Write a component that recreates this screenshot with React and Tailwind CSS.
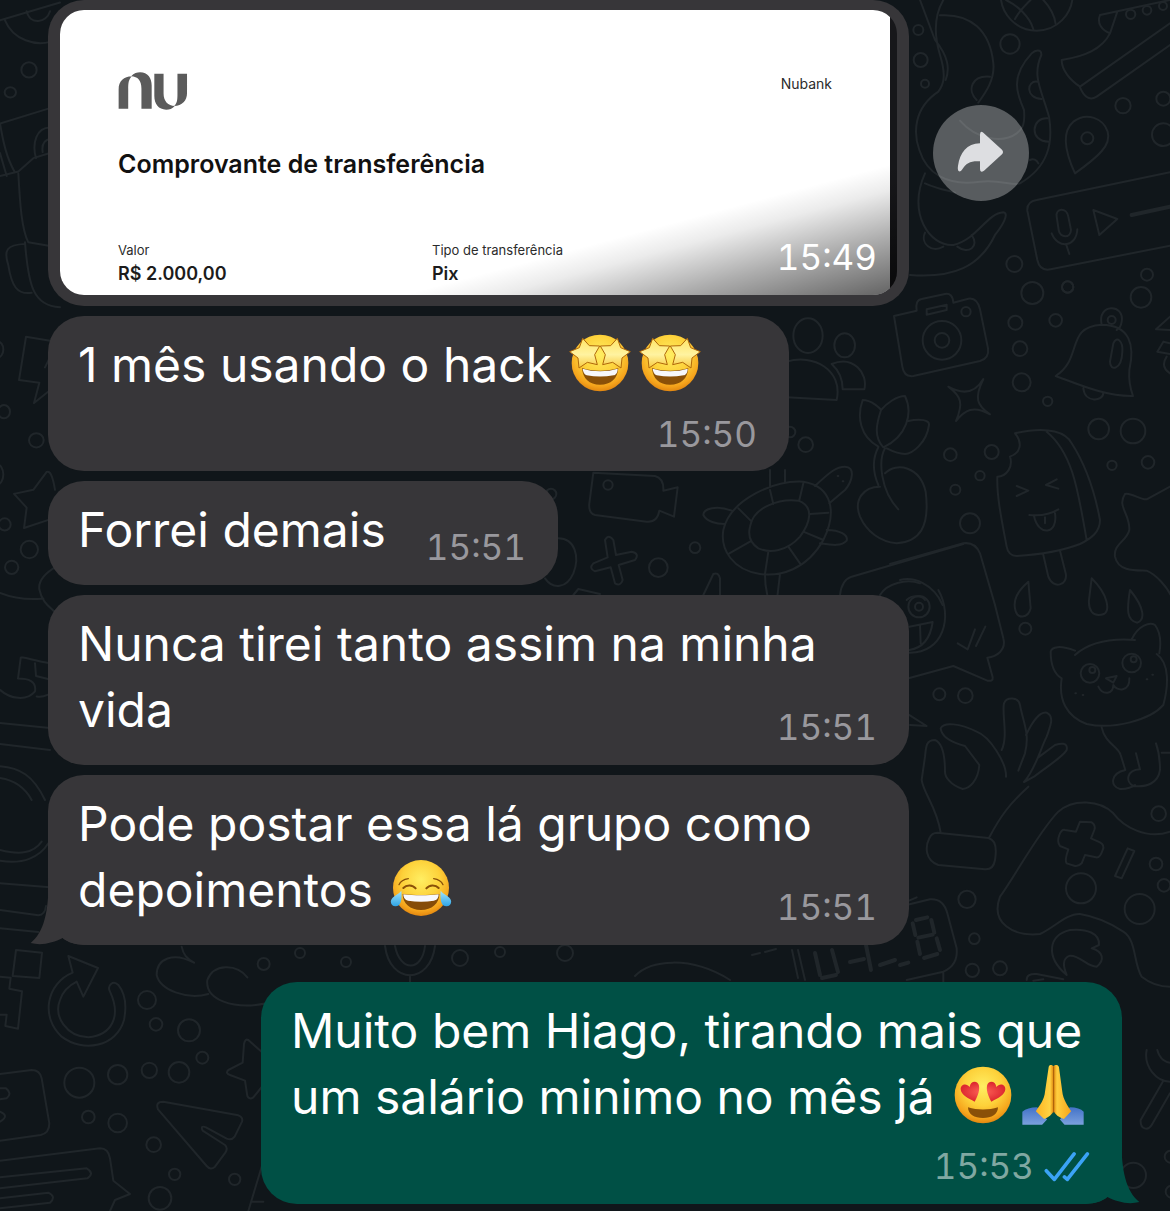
import React from "react";

const TAIL = "M146 118 C146 222 132 280 92 313 C125 322 160 312 188 298 C205 312 225 318 250 318 L262 318 L262 118 Z";

function Doodles() {
  return (
    <svg
      aria-hidden="true"
      className="absolute inset-0 h-full w-full fill-none stroke-[#20262a] stroke-2 [&_*]:[vector-effect:non-scaling-stroke]"
      viewBox="0 0 1170 1211"
      preserveAspectRatio="xMinYMin slice"
      strokeLinecap="round"
      strokeLinejoin="round"
    >
      <g transform="translate(900 0) scale(.33333)">
        <circle cx="55" cy="90" r="15" /><circle cx="62" cy="180" r="21" /><circle cx="75" cy="251" r="12" />
        <circle cx="330" cy="132" r="29" /><circle cx="669" cy="317" r="23" /><circle cx="790" cy="296" r="21" />
        <circle cx="790" cy="404" r="34" /><circle cx="343" cy="792" r="24" /><circle cx="503" cy="861" r="17" />
        <circle cx="741" cy="824" r="18" /><circle cx="692" cy="43" r="14" /><circle cx="741" cy="31" r="13" /><circle cx="789" cy="18" r="12" />
        <circle cx="410" cy="-16" r="108" /><path d="M345 57 C365 20 390 5 400 -10 M318 0 C350 15 390 50 400 88 M430 0 C450 20 465 50 467 72" />
        <path d="M60 0 L105 120 C145 170 150 205 137 240 M130 0 C95 60 108 125 120 165 C140 230 130 255 115 275 C40 325 40 400 58 450 C80 520 140 560 240 545 C300 537 340 560 360 550 C445 500 460 430 447 350 C425 270 395 230 424 165 C425 145 405 150 395 160 C330 230 350 280 372 330 C375 370 370 385 350 400 C310 430 230 420 180 362" />
        <path d="M120 46 C210 40 270 90 280 190 C285 240 255 280 235 308 M270 230 C215 225 200 270 230 300 M412 245 C380 240 375 295 425 297 M443 355 C395 350 385 425 447 425 M390 480 C400 475 410 480 415 490" />
        <path d="M75 520 C20 640 90 740 160 735 C230 720 260 640 310 637 C330 640 305 680 285 705 C240 800 160 835 30 825 M75 698 C60 730 95 760 130 740 M215 705 C240 740 205 765 172 740 M75 550 C120 570 150 572 165 578" />
        <path d="M600 45 L810 0 M600 45 C590 70 605 90 630 100 L652 35 M630 100 C605 150 550 170 485 180 C485 210 510 240 540 260 L810 70 M540 262 C550 285 565 305 590 290 L810 135" />
        <path d="M525 520 C495 455 485 395 520 365 C560 335 610 355 623 395 C635 435 595 470 525 520Z" /><circle cx="562" cy="415" r="18" />
        <path d="M810 517 L410 600 Q380 605 382 632 L412 780 Q420 815 452 808 L810 737" />
        <path d="M470 650 C465 625 500 620 505 650 L513 690 C512 715 480 715 476 690Z M455 700 C475 750 530 740 532 688 M498 732 L508 762 M580 630 L652 657 L598 705Z" /><path d="M695 645 L810 620" strokeWidth="4" />
      </g>
      <g transform="translate(900 280) scale(.33333)">
        <path d="M-18 108 L50 92 Q45 60 65 57 L135 42 Q158 38 160 68 L205 56 Q232 52 240 88 L264 205 Q268 235 240 243 L40 288 Q12 292 7 260 Z" />
        <circle cx="126" cy="181" r="58" /><circle cx="126" cy="181" r="22" /><circle cx="198" cy="95" r="14" /><path d="M80 88 L140 74 V90 L80 104Z" />
        <circle cx="397" cy="39" r="33" /><circle cx="503" cy="21" r="17" /><circle cx="346" cy="128" r="21" /><circle cx="467" cy="121" r="19" /><circle cx="360" cy="206" r="22" /><circle cx="365" cy="307" r="27" /><circle cx="443" cy="364" r="14" /><circle cx="723" cy="52" r="31" />
        <circle cx="596" cy="447" r="31" /><circle cx="699" cy="453" r="37" /><circle cx="636" cy="556" r="14" /><circle cx="744" cy="547" r="19" /><circle cx="151" cy="524" r="19" /><circle cx="275" cy="516" r="21" /><circle cx="240" cy="587" r="14" /><circle cx="166" cy="629" r="15" /><circle cx="210" cy="730" r="30" />
        <path d="M145 320 C190 345 225 340 250 297 C222 355 230 375 270 403 C220 375 195 390 168 423 C190 370 185 350 145 320Z" />
        <path d="M467 288 C550 235 495 140 605 134 C690 135 705 195 688 270 Q685 310 699 348 C620 350 540 315 467 288Z M605 134 C590 70 675 70 665 125 Q662 145 650 150 M550 325 C555 370 610 365 610 338" /><circle cx="635" cy="120" r="12" /><path d="M640 190 C650 165 670 185 667 215 C665 270 630 275 630 245Z" />
        <path d="M345 460 C450 435 500 460 515 490 C560 560 585 640 600 720 C600 755 575 775 540 792 C480 815 400 825 350 828 Q325 828 320 800 C305 720 290 650 292 590 C320 590 340 560 330 530 C360 520 370 490 345 460Z M440 455 C520 520 535 640 560 780 M430 825 L445 890 C460 930 505 915 497 880 L480 812 M350 618 L385 632 L350 648 M470 598 L438 615 L475 626 M388 705 Q440 710 475 688 M402 708 C415 770 475 765 465 700 M435 712 V730" />
        <path d="M0 900 C40 890 100 910 128 975 M20 960 C35 945 65 945 75 960 M-30 852 L190 790 Q225 785 240 820 L285 975" />
        <path d="M810 620 L740 658 C720 660 690 635 675 642 C650 680 690 700 688 750 C680 785 640 790 645 830 C655 880 720 870 740 872 C770 885 800 920 815 950 M810 110 L768 148 L810 150 M790 185 L772 215 L810 222 M790 185 L810 190 M800 230 Q780 260 810 280" />
        <path d="M385 905 C350 935 340 960 345 985 C350 1020 385 1015 392 985 Z M575 895 C625 945 630 990 612 1002 C575 1015 565 985 567 960Z M690 930 C735 985 735 1020 712 1028 C680 1022 680 990 690 930Z" />
      </g>
      <g transform="translate(900 590) scale(.33333)">
        <path d="M285 45 L310 145 C320 180 290 200 262 203 L278 262 Q280 275 262 272 L160 228 L20 266 M20 370 L80 408 L30 405 M115 0 C160 80 130 190 28 188 M28 110 L98 96 C90 155 60 175 28 180 M60 105 L62 160" /><circle cx="57" cy="50" r="32" /><circle cx="57" cy="50" r="12" />
        <path d="M173 160 L203 178 L225 118 M228 168 L256 110" />
        <circle cx="376" cy="116" r="18" /><circle cx="118" cy="313" r="18" /><circle cx="196" cy="317" r="22" />
        <path d="M525 195 C570 155 640 145 705 150 M695 148 C715 105 750 95 765 105 C780 125 785 150 778 190 M525 182 C480 165 455 170 452 185 C452 220 460 250 485 265 C475 330 500 380 560 402 C640 420 750 390 790 345 C805 290 810 220 770 192 M605 412 C615 460 655 470 662 495 L676 540 C630 550 630 590 660 597 C680 598 700 590 705 585 M708 490 L720 538 C680 540 675 575 700 588 C740 592 775 580 780 540 C780 505 775 480 768 460 M785 488 H810" />
        <circle cx="570" cy="250" r="28" /><circle cx="695" cy="219" r="28" /><circle cx="577" cy="240" r="9" /><circle cx="701" cy="208" r="9" /><path d="M618 265 L650 258 L640 278Z M595 290 C610 320 640 310 640 285 C650 305 690 305 688 265 M526 310 h2 M548 315 h2 M740 268 h2 M757 254 h2" />
        <path d="M318 560 C320 520 270 440 230 425 C180 400 130 395 122 415 C125 445 165 460 195 468 L238 525 C235 570 210 595 188 597 C150 585 135 560 135 545 C135 500 130 460 105 450 C80 450 78 465 75 500 L65 570 C70 610 110 650 122 728 M305 480 C325 440 305 370 312 340 C320 320 355 320 360 345 C370 400 390 430 375 490 L355 542 M378 435 C395 400 415 365 440 368 C465 380 450 410 440 440 C420 480 405 540 372 576 L402 560 C440 530 490 500 500 480 C505 455 480 460 465 465 L415 502 M385 590 C330 640 300 680 268 742 M112 728 L265 744 C290 750 290 780 285 810 Q280 840 255 838 L115 825 C75 810 75 770 88 745 Q95 728 112 728Z" />
        <path d="M810 725 C740 750 670 710 640 670 C600 630 520 625 475 665 C420 720 350 850 300 920 C270 1000 340 1040 420 1032 C460 1015 500 970 540 972 C590 980 640 1005 670 1025 C710 1050 700 1120 725 1160 C750 1180 780 1190 810 1190" />
        <path d="M540 695 L575 697 Q588 705 583 720 L573 745 L600 757 Q615 765 608 780 Q600 805 588 802 L555 795 L545 820 Q535 830 525 828 L500 820 Q493 812 505 778 L480 768 Q470 755 478 735 Q485 717 495 720 L528 725Z M683 775 L703 783 L665 865 L645 858Z" />
        <circle cx="543" cy="895" r="45" /><circle cx="719" cy="957" r="45" /><circle cx="776" cy="671" r="22" /><circle cx="768" cy="822" r="19" /><circle cx="792" cy="886" r="19" /><circle cx="201" cy="928" r="26" /><circle cx="223" cy="1046" r="16" /><circle cx="217" cy="1141" r="20" /><circle cx="300" cy="1135" r="21" />
        <path d="M500 1155 C435 1100 445 1035 510 1020 C560 1015 600 1030 597 1065 L575 1075 C610 1085 615 1110 590 1130 C560 1130 540 1095 510 1097 C485 1105 490 1130 500 1155Z M380 1170 Q380 1150 410 1152 L490 1168 M400 1172 L430 1168" />
        <path d="M20 945 L90 928 Q130 925 142 970 L170 1075 Q175 1125 130 1145 L20 1170 M130 1148 V1175 M20 935 L50 922" /><path d="M48 990 L82 982 M38 1000 L46 1035 M94 990 L103 1028 M55 1043 L98 1034 M52 1055 L60 1092 M110 1045 L120 1080 M72 1104 L112 1092 M0 1125 L25 1118" strokeWidth="4" />
      </g>
      <g transform="translate(540 470) scale(.33333)">
        <path d="M160 8 L345 18 Q372 25 370 62 L413 52 L402 140 L358 122 Q352 158 320 155 L165 135 Q145 130 148 100Z" /><circle cx="204" cy="45" r="14" /><circle cx="33" cy="72" r="16" />
        <path d="M55 205 C105 205 120 260 100 310 C80 355 40 360 15 325 M195 210 Q205 190 220 210 L228 255 L275 245 Q300 250 285 270 L236 285 L248 330 Q242 350 225 340 L212 292 L165 304 Q145 295 160 280 L203 262Z M490 375 L520 312 Q535 305 540 325 V375 M100 375 L115 357 L180 372" />
        <circle cx="465" cy="233" r="16" /><circle cx="355" cy="293" r="28" />
        <path d="M550 180 C570 90 700 30 790 35 C880 50 890 130 850 210 C800 300 720 320 660 312 C580 300 540 240 550 180Z M630 170 C640 110 720 85 775 92 C825 110 810 160 780 200 C740 245 690 250 655 235 C625 215 625 190 630 170Z M690 60 L700 102 M790 40 L778 90 M810 132 L865 128 M790 185 L850 210 M745 230 L780 280 M685 245 L675 312 M630 215 L568 250 M595 115 L635 155 M575 122 C530 105 490 115 490 135 C500 155 530 162 553 162 M825 48 C870 5 890 -10 915 -10 C945 -10 940 30 915 60 L868 100 M860 180 C900 180 925 195 920 212 C905 230 875 225 840 220 M675 315 C675 350 680 365 683 380 M720 312 L712 380 M690 50 V0 M735 35 V0 M893 18 h2 M908 34 h2" />
        <path d="M900 375 Q905 330 935 320 L1270 222 M1020 375 C1040 340 1100 325 1140 340" />
      </g>
      <g transform="translate(780 310) scale(.33333)">
        <ellipse cx="84" cy="77" rx="44" ry="52" /><ellipse cx="194" cy="106" rx="31" ry="36" /><circle cx="77" cy="404" r="22" /><circle cx="30" cy="366" r="16" />
        <path d="M20 155 C100 130 190 180 170 270 L20 262 M155 162 C220 135 265 190 253 238 H188 C188 205 175 180 155 162 M295 410 C240 380 230 320 248 270 C275 270 300 295 303 300 C320 280 350 258 375 258 C400 310 380 380 310 412 C280 380 290 340 303 300 M385 333 C420 325 450 330 447 345 C440 400 395 432 375 432 C350 432 330 420 320 415 M295 412 C275 450 280 490 295 525 M315 415 C295 450 300 540 355 598 M315 490 C350 455 420 470 437 545 C450 650 420 695 350 700 C300 695 260 665 240 620 C220 570 250 530 300 530" />
      </g>
      <g transform="translate(0 840) scale(.33333)">
        <path d="M0 30 C60 45 100 40 125 5 M0 62 C70 75 120 50 145 10 M0 130 L150 142 M0 210 L115 226 Q135 225 138 198 M0 265 L115 276 M48 330 L126 338 L118 414 L38 408Z M0 410 L32 413 L28 446 L66 454 L54 566 L16 558 L20 524 H0" />
        <path d="M218 398 C140 430 120 530 185 590 C250 640 350 620 372 540 C380 500 375 460 355 435 C340 420 320 435 330 455 C365 530 335 585 265 592 C200 590 160 530 180 480 C190 450 210 435 230 425 L250 470 L294 384 L205 348Z" />
        <path d="M545 320 C550 345 560 355 582 368 C520 335 470 355 470 405 C480 450 560 480 625 462 M742 412 C710 370 640 370 622 420 C615 480 700 510 800 490" />
        <circle cx="791" cy="372" r="18" /><circle cx="441" cy="480" r="27" /><circle cx="468" cy="553" r="19" /><circle cx="567" cy="571" r="33" /><circle cx="607" cy="653" r="18" /><circle cx="238" cy="728" r="45" /><circle cx="353" cy="704" r="29" /><circle cx="448" cy="691" r="23" /><circle cx="537" cy="697" r="31" /><circle cx="265" cy="831" r="19" /><circle cx="353" cy="849" r="28" /><circle cx="461" cy="914" r="22" /><circle cx="524" cy="1003" r="17" /><circle cx="704" cy="1018" r="17" /><circle cx="480" cy="1075" r="34" />
        <path d="M790 640 L745 600 Q735 595 732 612 L728 668 L685 690 Q675 700 690 705 L735 722 L742 768 Q748 780 760 772 L790 735 M490 785 L715 826 Q730 832 726 845 L704 890 Q695 902 680 896 L618 862 Q600 855 608 872 L675 915 Q685 925 676 938 L645 980 Q632 992 620 978 L474 808 Q465 785 490 785Z" />
        <path d="M0 702 L95 690 Q120 690 125 715 L148 850 Q148 880 122 885 L0 902 M0 745 H18 Q38 760 20 775 L0 778 M0 815 Q30 828 0 845 M0 962 L300 925 Q325 925 330 955 L340 1022 L390 1062 L345 1080 L330 1113 M0 1012 L260 985 Q285 1000 262 1015 L0 1045 M0 1075 L145 1058 Q170 1070 150 1088 L0 1105 M785 980 L745 1113 M755 1085 H790" />
      </g>
      <g transform="scale(.33333 .5102)">
        <path d="M0 40 L180 5 M15 40 C40 80 110 90 150 82 M80 22 C90 50 140 45 150 22 M0 242 L150 212 M0 242 C10 280 20 310 45 338 M0 300 L20 345 M0 345 L55 336 L100 310 L150 300 M55 340 C60 400 65 450 85 475 L150 482 M75 475 C85 560 100 600 180 602 M75 478 C20 480 10 490 25 520 C35 560 50 578 95 574 M150 250 C110 250 95 280 108 310 M150 272 C130 275 125 285 128 298" />
        <path d="M150 668 L78 660 L57 745 L118 750 L102 790 L150 765 M135 720 L150 700 M42 968 L100 960 L140 925 Q155 920 165 960 M42 968 L80 995 L72 1035 L150 1018 M0 1162 C50 1175 100 1175 130 1173 M170 1110 C130 1125 115 1140 118 1155 C125 1180 150 1190 165 1200 M150 1300 C100 1295 60 1285 62 1290 L54 1330 C85 1330 110 1335 105 1355 C80 1375 30 1370 0 1352 M105 1300 L108 1325 L150 1332 M110 1365 C130 1368 140 1362 150 1360 M0 1417 L150 1427 M0 1458 L150 1470 M0 1502 C60 1505 100 1520 135 1568 M0 1525 C50 1530 80 1550 95 1568" />
        <ellipse cx="87" cy="137" rx="23" ry="15" /><ellipse cx="31" cy="181" rx="17" ry="10" /><ellipse cx="109" cy="863" rx="22" ry="14" /><ellipse cx="88" cy="1077" rx="26" ry="17" /><ellipse cx="35" cy="1112" rx="20" ry="13" /><ellipse cx="12" cy="807" rx="18" ry="13" /><ellipse cx="14" cy="1028" rx="18" ry="12" /><ellipse cx="-8" cy="685" rx="18" ry="16" /><ellipse cx="-10" cy="930" rx="20" ry="20" />
      </g>
      <path d="M385 946 C390 985 430 985 435 946 M395 946 C400 972 422 972 425 946 M410 975 V990 M635 976 C650 960 690 955 730 980 M765 952 L776 949 M752 955 L760 953 M792 950 L798 978 M798 950 L805 980" />
      <path d="M815 953 L820 975 M832 950 L838 972 M822 978 L836 975 M850 962 L864 959 M866 945 L871 970 M880 965 L895 960" strokeWidth="4" />
      <circle cx="300" cy="953" r="5" /><circle cx="460" cy="958" r="8" /><circle cx="500" cy="952" r="5" /><circle cx="565" cy="953" r="8" /><circle cx="346" cy="962" r="5" />
      <g transform="translate(930 1050) scale(.33333)">
        <path d="M650 0 C640 50 680 95 720 95 M682 0 C690 30 710 38 720 38 M700 92 L632 210 C630 240 655 242 665 225 L720 130" /><circle cx="610" cy="376" r="38" /><circle cx="722" cy="320" r="18" /><circle cx="725" cy="425" r="18" />
      </g>
    </svg>
  );
}

function Ramp({ id }) {
  return (
    <radialGradient id={id} cx=".5" cy=".35" r=".68">
      <stop offset="0" stopColor="#ffee62" />
      <stop offset=".5" stopColor="#fdd13a" />
      <stop offset=".82" stopColor="#f5a41c" />
      <stop offset="1" stopColor="#dc7d0c" />
    </radialGradient>
  );
}

function Emoji({ label, viewBox, children }) {
  return (
    <svg role="img" aria-label={label} viewBox={viewBox} className="mx-1 -mt-3 inline-block h-15 w-[62px] align-middle">
      {children}
    </svg>
  );
}

const STAR_LEFT = "M75 54 L95 76 L126 77 L111 103 L119 133 L89 126 L64 143 L61 113 L36 94 L65 82 Z";
const STAR_RIGHT = "M179 54 L159 76 L128 77 L143 103 L135 133 L165 126 L190 143 L193 113 L218 94 L189 82 Z";

function StarStruck({ id }) {
  return (
    <Emoji label="Olhos de estrela" viewBox="34 38 186 180">
      <defs>
        <Ramp id={id} />
        <linearGradient id={id + "s"} x1="0" y1="0" x2="0" y2="1">
          <stop offset="0" stopColor="#ffe566" />
          <stop offset=".55" stopColor="#fff3a0" />
          <stop offset="1" stopColor="#f8c93e" />
        </linearGradient>
      </defs>
      <circle cx="127" cy="128" r="85" fill={`url(#${id})`} />
      <path d="M73 143 C105 154 150 154 182 143 C180 175 160 193 127 193 C95 193 75 175 73 143Z" fill="#8a5008" />
      <path d="M75 145 C105 155 150 155 180 145 C180 158 174 164 168 165 C140 170 115 170 87 165 C80 163 76 155 75 145Z" fill="#f7f7fb" />
      <g fill={`url(#${id}s)`} stroke="#b0680a" strokeWidth="3" strokeLinejoin="round">
        <path d={STAR_LEFT} />
        <path d={STAR_RIGHT} />
      </g>
    </Emoji>
  );
}

function Joy() {
  return (
    <Emoji label="Chorando de rir" viewBox="40 28 186 180">
      <defs>
        <Ramp id="joy" />
        <linearGradient id="tear" x1="0" y1="0" x2="0" y2="1">
          <stop offset="0" stopColor="#a6e6fb" />
          <stop offset="1" stopColor="#2da4e6" />
        </linearGradient>
      </defs>
      <circle cx="133" cy="118" r="84" fill="url(#joy)" />
      <g fill="none" stroke="#8a5008" strokeLinecap="round">
        <path d="M67 108 C72 97 83 92 95 90 M199 108 C194 97 183 92 171 90" strokeWidth="4" />
        <path d="M80 118 C90 107 108 108 117 119 M149 119 C158 108 176 107 186 118" strokeWidth="6" />
      </g>
      <path d="M78 136 C110 140 156 140 188 136 C188 165 165 184 133 184 C101 184 78 165 78 136Z" fill="#854c08" />
      <path d="M80 137 C110 141 156 141 186 137 C186 148 180 155 172 156 C145 160 121 160 94 156 C86 155 80 147 80 137Z" fill="#f8f8fc" />
      <path d="M74 126 C76 150 74 173 57 173 C42 173 38 157 48 147 C56 139 66 136 74 126Z M192 126 C190 150 192 173 209 173 C224 173 228 157 218 147 C210 139 200 136 192 126Z" fill="url(#tear)" />
    </Emoji>
  );
}

function HeartEyes() {
  return (
    <Emoji label="Olhos de coração" viewBox="64 48 186 180">
      <defs>
        <Ramp id="heyes" />
        <radialGradient id="heart">
          <stop offset="0" stopColor="#ff6558" />
          <stop offset="1" stopColor="#dd2730" />
        </radialGradient>
      </defs>
      <circle cx="157" cy="138" r="85" fill="url(#heyes)" />
      <path d="M132 158 C112 148 91 138 90 121 C89 105 108 101 117 114 C119 94 142 94 145 110 C148 128 138 146 132 158Z M182 158 C202 148 223 138 224 121 C225 105 206 101 197 114 C195 94 172 94 169 110 C166 128 176 146 182 158Z" fill="url(#heart)" />
      <path d="M112 175 C140 184 174 184 202 175 C202 196 183 207 157 207 C131 207 112 196 112 175Z" fill="#8a5008" />
    </Emoji>
  );
}

function Hands() {
  return (
    <Emoji label="Mãos juntas" viewBox="270 50 186 182">
      <defs>
        <linearGradient id="palm" x1="0" y1="0" x2="1" y2="0">
          <stop offset="0" stopColor="#fdb321" />
          <stop offset=".4" stopColor="#ffd343" />
          <stop offset=".5" stopColor="#e0890f" />
          <stop offset=".6" stopColor="#ffcf3f" />
          <stop offset="1" stopColor="#f6a51c" />
        </linearGradient>
        <linearGradient id="sleeve" x1="0" y1="0" x2="0" y2="1">
          <stop offset="0" stopColor="#4272c8" />
          <stop offset="1" stopColor="#7ba0dd" />
        </linearGradient>
      </defs>
      <path d="M270 192 Q285 178 315 178 L345 215 L330 231 H270Z M456 192 Q444 178 414 178 L384 215 L398 231 H456Z" fill="url(#sleeve)" />
      <path d="M350 55 C353 48 360 48 364 54 C369 48 378 48 381 56 L391 130 C393 155 410 178 418 190 L396 214 C380 208 370 200 365 190 C360 200 350 208 336 214 L311 190 C324 172 337 155 339 130Z" fill="url(#palm)" />
      <path d="M365 54 V194" stroke="#a65a0a" strokeWidth="3" />
    </Emoji>
  );
}

function Time({ children, className = "text-[#99989d]" }) {
  return <time className={"text-[35px] leading-[44px] tabular-nums " + className}>{children}</time>;
}

function Bubble({ children, tone = "bg-[#373639]", className = "" }) {
  return (
    <article className={"relative max-w-full rounded-[36px] pt-4 pr-8 pl-[30px] text-[48px] leading-[66px] text-white " + tone + " " + className}>
      {children}
    </article>
  );
}

function Message({ time, children }) {
  return (
    <p className="relative pb-[22px]">
      {children}
      <Time className="float-right mt-7 text-[#99989d]">{time}</Time>
    </p>
  );
}

function Receipt() {
  return (
    <article className="w-[861px] rounded-[36px] bg-[#373639] px-3 pt-2.5 pb-[11px]">
      <div className="relative overflow-hidden rounded-3xl bg-[#17171a] pr-[7px]">
        <div className="bg-white px-[58px] pt-[62px] pb-[7px] text-[#2b2b2b]">
          <div className="flex items-start justify-between">
            <svg role="img" aria-label="nu" viewBox="233 217 210 115" className="h-[38px] w-[70px] fill-[#5b5b5b]">
              <path d="M234 328 V270 C234 243 250 231 274 230 C264 240 263 250 263 270 V328Z M272 230 C280 221 290 218 299 218 C322 218 334 235 334 258 V328 H303 V268 C303 242 292 231 272 230Z M342 222 H370 V282 C370 306 384 319 404 320 C396 329 388 331 378 331 C355 331 342 314 342 289Z M412 222 H441 V280 C441 305 426 319 402 320 C411 312 412 300 412 285Z" />
            </svg>
            <span className="text-sm leading-6">Nubank</span>
          </div>
          <h2 className="mt-[38px] text-[25px] leading-8 font-semibold text-[#111]">Comprovante de transferência</h2>
          <dl className="mt-[60px] grid grid-cols-[314px_1fr]">
            <div>
              <dt className="text-[13px] leading-5">Valor</dt>
              <dd className="text-lg leading-7 font-semibold text-[#1c1c1c]">R$ 2.000,00</dd>
            </div>
            <div>
              <dt className="text-[13px] leading-5">Tipo de transferência</dt>
              <dd className="text-lg leading-7 font-semibold text-[#1c1c1c]">Pix</dd>
            </div>
          </dl>
        </div>
        <div className="absolute inset-0 flex items-end justify-end bg-[linear-gradient(165deg,transparent_74%,rgba(0,0,0,.08)_79%,rgba(0,0,0,.32)_88%,rgba(0,0,0,.62)_100%)] pr-5 pb-4">
          <Time className="text-white">15:49</Time>
        </div>
      </div>
    </article>
  );
}

export default function App() {
  return (
    <main className="relative min-h-screen overflow-hidden bg-[#10161a] font-['Inter','Liberation_Sans',sans-serif]">
      <Doodles />
      <div className="relative flex flex-col items-start gap-2.5 pr-12 pb-1 pl-12">
        <div className="flex max-w-full items-center gap-6">
          <Receipt />
          <button type="button" aria-label="Encaminhar" className="size-24 shrink-0 rounded-full bg-white/30">
            <svg aria-hidden="true" viewBox="99 312 288 288" className="size-24 fill-[#dddee1]">
              <path d="M240 401 Q240 388 250 395 L306 446 Q312 453 306 460 L252 509 Q240 517 240 504 V481 C213 479 198 486 187 505 Q183 513 177 511 Q172 508 174 494 C180 456 200 428 240 427Z" />
            </svg>
          </button>
        </div>
        <Bubble className="w-[741px]">
          <p>1 mês usando o hack <StarStruck id="st1" /><StarStruck id="st2" /></p>
          <div className="flex justify-end pt-3.5 pb-[15px]"><Time>15:50</Time></div>
        </Bubble>
        <Bubble className="w-[510px]"><Message time="15:51">Forrei demais</Message></Bubble>
        <Bubble className="w-[861px]">
          <Message time="15:51"><span>Nunca tirei tanto assim na minha</span> <span>vida</span></Message>
        </Bubble>
        <Bubble className="w-[861px]">
          <svg aria-hidden="true" viewBox="90 118 171 201" className="absolute bottom-0 -left-[18px] h-[67px] w-[57px] fill-[#373639]"><path d={TAIL} /></svg>
          <Message time="15:51"><span>Pode postar essa lá grupo como</span> <span>depoimentos <Joy /></span></Message>
        </Bubble>
        <Bubble tone="bg-[#005045]" className="mt-[27px] w-[861px] self-end">
          <svg aria-hidden="true" viewBox="90 118 171 201" className="absolute -right-[18px] bottom-0 h-[67px] w-[57px] -scale-x-100 fill-[#005045]"><path d={TAIL} /></svg>
          <p>Muito bem Hiago, tirando mais que um salário minimo no mês já <HeartEyes /><Hands /></p>
          <div className="relative flex items-center justify-end gap-2.5 pt-3.5 pb-4">
            <Time className="text-[#80a8a2]">15:53</Time>
            <svg role="img" aria-label="Lida" viewBox="348 298 142 94" className="h-[31px] w-[46px] fill-none stroke-[#3ba3f6]" strokeWidth="11" strokeLinecap="round" strokeLinejoin="round">
              <path d="M355 358 L380 385 L441 306 M411 377 L420 385 L482 306" />
            </svg>
          </div>
        </Bubble>
      </div>
    </main>
  );
}
